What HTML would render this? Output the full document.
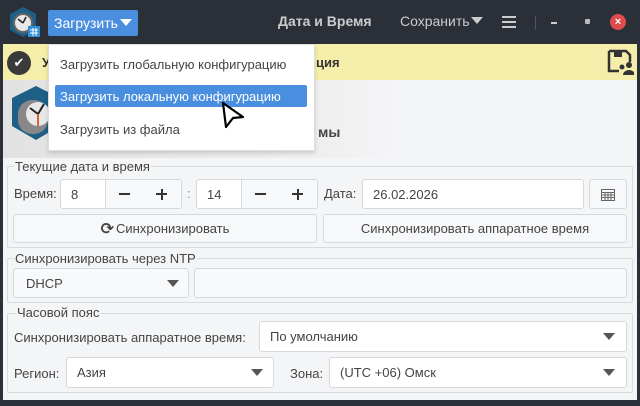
<!DOCTYPE html>
<html><head><meta charset="utf-8"><style>
*{box-sizing:border-box;margin:0;padding:0}
body{width:640px;height:406px;overflow:hidden;background:#2b2f38;font-family:"Liberation Sans","DejaVu Sans",sans-serif;font-size:13px;color:#333;position:relative}
.a{position:absolute}
.win{left:3px;top:44px;width:634px;height:356px;background:#f4f5f7}
.field{position:absolute;background:#fff;border:1px solid #d6d8dc;border-radius:3px;font-size:13px;color:#444;padding-left:10px;display:flex;align-items:center}
.btn{position:absolute;background:#f7f8fa;border:1px solid #d6d8dc;border-radius:3px;display:flex;align-items:center;justify-content:center;color:#444;font-size:13px}
.grp{position:absolute;border:1px solid #d9dbde;border-radius:2px}
.gl{position:absolute;background:#f4f5f7;font-size:13px;color:#444;padding:0 1px;line-height:14px}
.lbl{position:absolute;font-size:13px;color:#444}
.tri{position:absolute;width:0;height:0;border-left:6px solid transparent;border-right:6px solid transparent;border-top:7px solid #555}
</style></head><body>
<!-- header -->
<svg class="a" style="left:8px;top:6px" width="34" height="34" viewBox="0 0 34 34"><polygon points="15,1 28,8 28,24 15,31 2,24 2,8" fill="#1e5f85"/><circle cx="15" cy="17" r="9" fill="#e8e8e8" stroke="#666" stroke-width="2"/><path d="M15 17 L10 13 M15 17 L18 11" stroke="#222" stroke-width="1.5"/><rect x="20" y="20" width="12" height="11" fill="#2f8fd8"/><path d="M22 24h8M22 27h8M25 22v8M28 22v8" stroke="#fff" stroke-width="1"/></svg>
<div class="a" style="left:48px;top:10px;width:90px;height:26px;background:#4a8fdf;border-radius:2px;color:#fff;font-size:14px;padding-left:6px;line-height:26px">Загрузить<span style="display:inline-block;width:0;height:0;border-left:6px solid transparent;border-right:6px solid transparent;border-top:7px solid #fff;margin-left:2px;vertical-align:2px"></span></div>
<div class="a" style="left:278px;top:13px;color:#ccc;font-size:14px;font-weight:bold">Дата и Время</div>
<div class="a" style="left:400px;top:13px;color:#ccc;font-size:14px">Сохранить<span style="display:inline-block;width:0;height:0;border-left:6px solid transparent;border-right:6px solid transparent;border-top:7px solid #ccc;margin-left:1px;vertical-align:2px"></span></div>
<div class="a" style="left:502px;top:16px;width:14px;height:2px;background:#ccc;box-shadow:0 5px 0 #ccc,0 10px 0 #ccc"></div>
<div class="a" style="left:535px;top:16px;width:1px;height:14px;background:#555"></div>
<div class="a" style="left:551px;top:22px;width:6px;height:2px;background:#ccc"></div>
<div class="a" style="left:585px;top:19px;width:5px;height:5px;background:#bbb;border-radius:1px"></div>
<div class="a" style="left:610px;top:14px;width:16px;height:16px;border-radius:50%;background:#e04b4b;color:#fff;font-size:11px;line-height:16px;text-align:center;font-weight:bold">×</div>
<div class="win a"></div>
<!-- yellow bar -->
<div class="a" style="left:3px;top:44px;width:634px;height:36px;background:#f4eeaa"></div>
<div class="a" style="left:7px;top:51px;width:24px;height:24px;border-radius:50%;background:#3a3a3a;color:#fff;text-align:center;line-height:24px;font-size:13px">✔</div>
<div class="a" style="left:42px;top:55px;font-weight:bold;font-size:13px">У</div>
<div class="a" style="left:316px;top:55px;font-weight:bold;font-size:13px;color:#333">ция</div>
<svg class="a" style="left:606px;top:48px" width="28" height="28" viewBox="0 0 28 28"><path d="M3 3h17l4 4v7M3 3v20h10" fill="none" stroke="#333" stroke-width="2.5"/><rect x="8" y="4" width="8" height="5" fill="#333"/><circle cx="16" cy="19" r="2.5" fill="#333"/><circle cx="23" cy="17" r="3" fill="#333"/><path d="M17 27a6 5 0 0 1 12 0z" fill="#333"/></svg>
<!-- banner -->
<div class="a" style="left:3px;top:80px;width:400px;height:78px;background:linear-gradient(90deg,#e2e2e2,#ececec 70%,#f4f5f7)"></div>
<svg class="a" style="left:8px;top:86px" width="40" height="60" viewBox="0 0 40 60"><polygon points="28,0 52,12 52,40 28,54 4,40 4,12" fill="#1e5f85"/><rect x="10" y="14" width="30" height="34" rx="14" fill="#888"/><circle cx="30" cy="28" r="12" fill="#e8e8e8"/><path d="M30 28 L22 22 M30 28 L36 18" stroke="#222" stroke-width="2"/><rect x="29" y="28" width="2" height="12" fill="#e06030"/></svg>
<div class="a" style="left:318px;top:124px;font-weight:bold;font-size:14px;color:#444">мы</div>
<!-- group 1 -->
<div class="grp" style="left:7px;top:166px;width:626px;height:82px"></div>
<div class="gl" style="left:14px;top:160px">Текущие дата и время</div>
<div class="lbl" style="left:14px;top:186px">Время:</div>
<div class="field" style="left:60px;top:179px;width:122px;height:30px">8</div>
<div class="a" style="left:105px;top:180px;width:76px;height:28px;background:#f7f8fa;border-left:1px solid #d6d8dc"></div>
<div class="a" style="left:119px;top:193px;width:11px;height:2px;background:#333"></div>
<div class="a" style="left:156px;top:193px;width:11px;height:2px;background:#333"></div><div class="a" style="left:160.5px;top:188.5px;width:2px;height:11px;background:#333"></div>
<div class="lbl" style="left:187px;top:186px;color:#888">:</div>
<div class="field" style="left:196px;top:179px;width:122px;height:30px">14</div>
<div class="a" style="left:241px;top:180px;width:76px;height:28px;background:#f7f8fa;border-left:1px solid #d6d8dc"></div>
<div class="a" style="left:255px;top:193px;width:11px;height:2px;background:#333"></div>
<div class="a" style="left:292px;top:193px;width:11px;height:2px;background:#333"></div><div class="a" style="left:296.5px;top:188.5px;width:2px;height:11px;background:#333"></div>
<div class="lbl" style="left:324px;top:186px">Дата:</div>
<div class="field" style="left:362px;top:179px;width:222px;height:30px">26.02.2026</div>
<div class="btn" style="left:589px;top:179px;width:38px;height:30px"><svg width="14" height="13" viewBox="0 0 14 13"><rect x="0.5" y="1.5" width="13" height="11" fill="none" stroke="#666"/><path d="M1 4.5h12M1 7h12M1 9.5h12M4 4v8M7 4v8M10 4v8" stroke="#666"/></svg></div>
<div class="btn" style="left:13px;top:214px;width:304px;height:29px"><span style="font-size:16px;font-weight:bold;color:#444;margin-right:2px">⟳</span>Синхронизировать</div>
<div class="btn" style="left:323px;top:214px;width:304px;height:29px">Синхронизировать аппаратное время</div>
<!-- group 2 -->
<div class="grp" style="left:7px;top:258px;width:626px;height:45px"></div>
<div class="gl" style="left:14px;top:252px">Синхронизировать через NTP</div>
<div class="btn" style="left:13px;top:268px;width:176px;height:30px;justify-content:flex-start;padding-left:12px;background:#f8f9fa">DHCP</div>
<div class="tri" style="left:167px;top:280px"></div>
<div class="field" style="left:194px;top:268px;width:433px;height:30px;background:#f8f9fa"></div>
<!-- group 3 -->
<div class="grp" style="left:7px;top:313px;width:626px;height:80px"></div>
<div class="gl" style="left:16px;top:306px">Часовой пояс</div>
<div class="lbl" style="left:14px;top:330px">Синхронизировать аппаратное время:</div>
<div class="field" style="left:259px;top:321px;width:368px;height:31px">По умолчанию</div>
<div class="tri" style="left:603px;top:333px"></div>
<div class="lbl" style="left:14px;top:366px">Регион:</div>
<div class="field" style="left:66px;top:357px;width:208px;height:31px">Азия</div>
<div class="tri" style="left:251px;top:369px"></div>
<div class="lbl" style="left:290px;top:366px">Зона:</div>
<div class="field" style="left:329px;top:357px;width:298px;height:31px">(UTC +06) Омск</div>
<div class="tri" style="left:603px;top:369px"></div>
<!-- dropdown menu -->
<div class="a" style="left:48px;top:44px;width:267px;height:107px;background:#fff;border:1px solid #ddd;box-shadow:0 2px 4px rgba(0,0,0,.15)"></div>
<div class="a" style="left:60px;top:57px;font-size:13px;color:#444">Загрузить глобальную конфигурацию</div>
<div class="a" style="left:55px;top:85px;width:252px;height:22px;background:#4a8fdf;border-radius:2px"></div>
<div class="a" style="left:60px;top:89px;font-size:13px;color:#fff">Загрузить локальную конфигурацию</div>
<div class="a" style="left:60px;top:122px;font-size:13px;color:#444">Загрузить из файла</div>
<svg class="a" style="left:220px;top:100px" width="26" height="30" viewBox="0 0 26 30"><path d="M3 3 L23 17 L13 18 L6 27 Z" fill="#fff" stroke="#000" stroke-width="2.2" stroke-linejoin="round"/></svg>
</body></html>
